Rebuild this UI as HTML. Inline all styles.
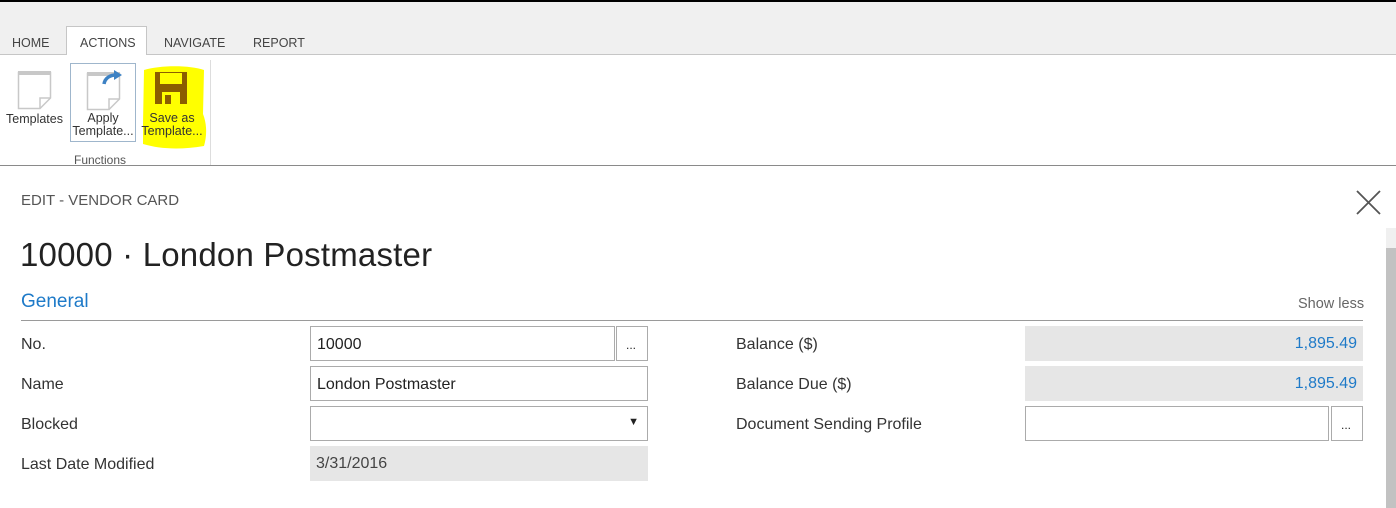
<!DOCTYPE html>
<html><head><style>
*{margin:0;padding:0;box-sizing:border-box}
body{width:1396px;height:508px;overflow:hidden;background:#fff;font-family:"Liberation Sans","DejaVu Sans",sans-serif;position:relative;color:#333}
.a{position:absolute}
.tab{position:absolute;top:36px;font-size:12.5px;color:#444}
.lbl{position:absolute;font-size:16px;color:#333}
.box{position:absolute;border:1px solid #ababab;background:#fff;font-size:16px;padding:9px 0 0 6px;height:35px;color:#222}
.gr{position:absolute;background:#e6e6e6;height:35px;font-size:16px}
</style></head><body>
<div class="a" style="left:0;top:0;width:1396px;height:2px;background:#000"></div>
<div class="a" style="left:0;top:2px;width:1396px;height:52px;background:#f0f0f0"></div>
<div class="a" style="left:0;top:54px;width:1396px;height:1px;background:#c6c6c6"></div>
<div class="a" style="left:66px;top:26px;width:81px;height:29px;background:#fff;border:1px solid #c6c6c6;border-bottom:none"></div>
<div class="tab" style="left:12px">HOME</div>
<div class="tab" style="left:80px">ACTIONS</div>
<div class="tab" style="left:164px">NAVIGATE</div>
<div class="tab" style="left:253px">REPORT</div>
<svg class="a" style="left:17px;top:70px" width="36" height="40"><path d="M1.5 2.5H33.5V28L23 38.5H1.5Z" fill="#fff" stroke="#c8c8c8" stroke-width="1.5"/><rect x="1" y="1" width="33" height="4" fill="#c8c8c8"/><path d="M23 38.5V28H33.5" fill="none" stroke="#c8c8c8" stroke-width="1.5"/></svg>
<div class="a" style="left:6px;top:112px;font-size:12.5px;color:#333">Templates</div>
<div class="a" style="left:70px;top:63px;width:66px;height:79px;border:1px solid #9fb6cc"></div>
<svg class="a" style="left:85px;top:67px" width="40" height="44"><path d="M2.5 6.5H34.5V32L24 42.5H2.5Z" fill="#fff" stroke="#c8c8c8" stroke-width="1.5"/><rect x="2" y="5" width="33" height="4" fill="#c8c8c8"/><path d="M24 42.5V32H34.5" fill="none" stroke="#c8c8c8" stroke-width="1.5"/><path d="M19 17C20 11 25 8 31 8" fill="none" stroke="#3d82c4" stroke-width="3.5"/><path d="M29 3L37 8L29 13Z" fill="#3d82c4"/></svg>
<div class="a" style="left:72px;top:112px;width:62px;text-align:center;font-size:12.5px;line-height:13px;color:#333">Apply<br>Template...</div>
<svg class="a" style="left:140px;top:64px" width="70" height="86"><path d="M4 6C20 1 50 1 64 6L63 50C67 60 67 72 64 82C40 86 20 85 3 80L3 60Z" fill="#ffff00"/><path d="M15 8H47V40H15Z" fill="#8b5e00"/><rect x="20" y="9" width="22" height="11" fill="#ffff00"/><rect x="22" y="28" width="18" height="12" fill="#ffff00"/><rect x="25" y="31" width="6" height="9" fill="#8b5e00"/></svg>
<div class="a" style="left:140px;top:112px;width:64px;text-align:center;font-size:12.5px;line-height:13px;color:#333">Save as<br>Template...</div>
<div class="a" style="left:74px;top:153px;font-size:12px;color:#555">Functions</div>
<div class="a" style="left:210px;top:60px;width:1px;height:105px;background:#ddd"></div>
<div class="a" style="left:0;top:165px;width:1396px;height:1px;background:#8a8a8a"></div>
<div class="a" style="left:21px;top:192px;font-size:15px;color:#555">EDIT - VENDOR CARD</div>
<svg class="a" style="left:1356px;top:190px" width="26" height="26"><path d="M1 1L24 24M24 1L1 24" stroke="#555" stroke-width="1.8"/></svg>
<div class="a" style="left:1386px;top:228px;width:10px;height:280px;background:#c2c2c2"></div>
<div class="a" style="left:1386px;top:228px;width:10px;height:20px;background:#f0f0f0"></div>
<div class="a" style="left:20px;top:236px;font-size:33px;color:#222;letter-spacing:0.2px">10000 · London Postmaster</div>
<div class="a" style="left:21px;top:291px;font-size:19px;color:#1e7ac8">General</div>
<div class="a" style="left:1298px;top:296px;font-size:14.5px;color:#666">Show less</div>
<div class="a" style="left:21px;top:320px;width:1342px;height:1px;background:#9a9a9a"></div>
<div class="lbl" style="left:21px;top:336px">No.</div>
<div class="lbl" style="left:21px;top:376px">Name</div>
<div class="lbl" style="left:21px;top:416px">Blocked</div>
<div class="lbl" style="left:21px;top:456px">Last Date Modified</div>
<div class="box" style="left:310px;top:326px;width:305px">10000</div>
<div class="box" style="left:616px;top:326px;width:32px;font-size:12px;padding:11px 0 0 9px">...</div>
<div class="box" style="left:310px;top:366px;width:338px">London Postmaster</div>
<div class="box" style="left:310px;top:406px;width:338px"><span style="position:absolute;right:8px;top:9px;font-size:11px">▼</span></div>
<div class="gr" style="left:310px;top:446px;width:338px;padding:9px 0 0 6px;color:#444">3/31/2016</div>
<div class="lbl" style="left:736px;top:336px">Balance ($)</div>
<div class="lbl" style="left:736px;top:376px">Balance Due ($)</div>
<div class="lbl" style="left:736px;top:416px">Document Sending Profile</div>
<div class="gr" style="left:1025px;top:326px;width:338px;text-align:right;padding:9px 6px 0 0;color:#1e7ac8">1,895.49</div>
<div class="gr" style="left:1025px;top:366px;width:338px;text-align:right;padding:9px 6px 0 0;color:#1e7ac8">1,895.49</div>
<div class="box" style="left:1025px;top:406px;width:304px"></div>
<div class="box" style="left:1331px;top:406px;width:32px;font-size:12px;padding:11px 0 0 9px">...</div>
</body></html>
